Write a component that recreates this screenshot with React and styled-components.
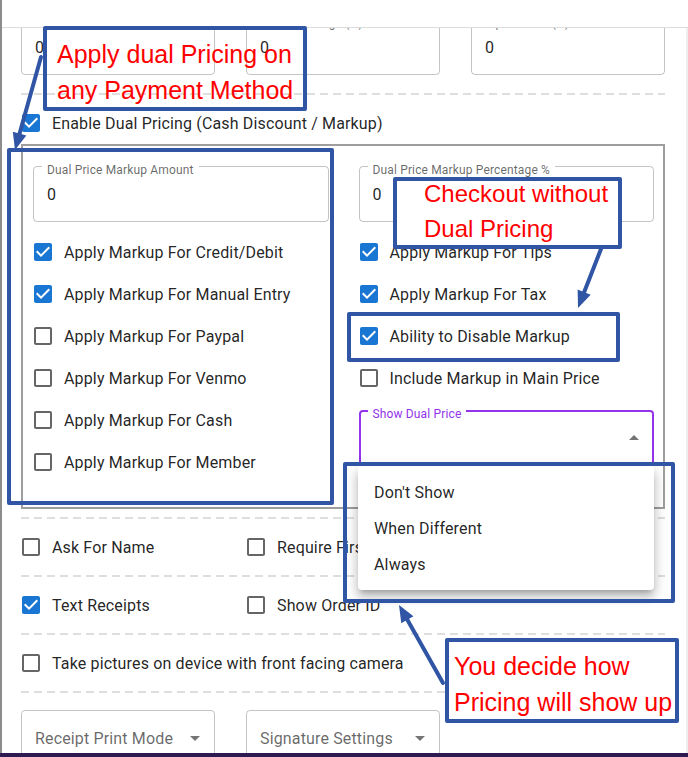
import React from "react";
import styled, { createGlobalStyle } from "styled-components";

const BLUE = "#2f55a4";
const PURPLE = "#9333ea";

const GlobalStyle = createGlobalStyle`
  html, body { margin: 0; padding: 0; }
  body {
    font-family: Roboto, "Liberation Sans", Arial, sans-serif;
    letter-spacing: 0.00938em;
    background: #2d1a52;
  }
`;

// mui style icon paths
const CHECKED = "M19 3H5c-1.11 0-2 .9-2 2v14c0 1.1.89 2 2 2h14c1.11 0 2-.9 2-2V5c0-1.1-.89-2-2-2zm-9 14l-5-5 1.41-1.41L10 14.17l7.59-7.59L19 8l-9 9z";
const UNCHECKED = "M19 5v14H5V5h14m0-2H5c-1.1 0-2 .9-2 2v14c0 1.1.9 2 2 2h14c1.1 0 2-.9 2-2V5c0-1.1-.9-2-2-2z";

const Check = ({ checked, label }) => (
  <CheckRow>
    <svg width="24" height="24" viewBox="0 0 24 24">
      <path d={checked ? CHECKED : UNCHECKED} fill={checked ? "#1976d2" : "rgba(0,0,0,0.6)"} />
    </svg>
    <span>{label}</span>
  </CheckRow>
);

const Caret = ({ up }) => (
  <svg width="24" height="24" viewBox="0 0 24 24">
    <path d={up ? "M7 14l5-5 5 5z" : "M7 10l5 5 5-5z"} fill="rgba(0,0,0,0.54)" />
  </svg>
);

const Field = ({ label, value }) => (
  <FieldBox>
    <FieldLabel>{label}</FieldLabel>
    <span>{value}</span>
  </FieldBox>
);

const SelectField = ({ placeholder, label, open }) => (
  <FieldBox $focused={open}>
    {label && <FieldLabel $focused={open}>{label}</FieldLabel>}
    <Placeholder>{placeholder}</Placeholder>
    <Caret up={open} />
  </FieldBox>
);

// arrow helper - line + filled head
const Arrow = ({ from, to }) => {
  const [x1, y1] = from;
  const [x2, y2] = to;
  const len = Math.hypot(x2 - x1, y2 - y1);
  const ux = (x2 - x1) / len;
  const uy = (y2 - y1) / len;
  const bx = x2 - ux * 17;
  const by = y2 - uy * 17;
  const nx = -uy * 7;
  const ny = ux * 7;
  return (
    <g>
      <line x1={x1} y1={y1} x2={bx + ux * 2} y2={by + uy * 2} stroke={BLUE} strokeWidth="4" strokeLinecap="round" />
      <polygon points={`${x2},${y2} ${bx + nx},${by + ny} ${bx - nx},${by - ny}`} fill={BLUE} />
    </g>
  );
};

const App = () => {
  return (
    <Page>
      <GlobalStyle />
      <Dialog>
        <Header />
        <Body>
          <Content>
            <ThreeCols>
              <Field label="Processing Fee (%)" value="0" />
              <Field label="Service Charge (%)" value="0" />
              <Field label="Tip Amount (%)" value="0" />
            </ThreeCols>
            <Dashed $mt={18} />
            <Spaced $mt={7}>
              <Check checked label="Enable Dual Pricing (Cash Discount / Markup)" />
            </Spaced>
            <DualBox>
              <Column>
                <Field label="Dual Price Markup Amount" value="0" />
                <List>
                  <Check checked label="Apply Markup For Credit/Debit" />
                  <Check checked label="Apply Markup For Manual Entry" />
                  <Check label="Apply Markup For Paypal" />
                  <Check label="Apply Markup For Venmo" />
                  <Check label="Apply Markup For Cash" />
                  <Check label="Apply Markup For Member" />
                </List>
              </Column>
              <Column>
                <Field label="Dual Price Markup Percentage %" value="0" />
                <List>
                  <Check checked label="Apply Markup For Tips" />
                  <Check checked label="Apply Markup For Tax" />
                  <Check checked label="Ability to Disable Markup" />
                  <Check label="Include Markup in Main Price" />
                </List>
                <Spaced $mt={11}>
                  <SelectField label="Show Dual Price" open />
                </Spaced>
              </Column>
            </DualBox>
            <Dashed $mt={8} />
            <OptionRow>
              <Check label="Ask For Name" />
              <Check label="Require First and Last Name" />
            </OptionRow>
            <Dashed />
            <OptionRow>
              <Check checked label="Text Receipts" />
              <Check label="Show Order ID" />
            </OptionRow>
            <Dashed />
            <OptionRow $single>
              <Check label="Take pictures on device with front facing camera" />
            </OptionRow>
            <Dashed />
            <ThreeCols $mt={17}>
              <SelectField placeholder="Receipt Print Mode" />
              <SelectField placeholder="Signature Settings" />
            </ThreeCols>
          </Content>
        </Body>
      </Dialog>

      <Menu>
        <MenuItem>Don't Show</MenuItem>
        <MenuItem>When Different</MenuItem>
        <MenuItem>Always</MenuItem>
      </Menu>

      <Callout $x={43} $y={26} $w={264} $h={85} $pad="6px 0 0 10px">
        Apply dual Pricing on<br />any Payment Method
      </Callout>
      <Callout $x={7} $y={148} $w={327} $h={357} />
      <Callout $x={393} $y={177} $w={229} $h={72} $fill $size={24} $lh={35} $pad="0 0 0 27px">
        <CalloutText $mt={-5}>Checkout without<br />Dual Pricing</CalloutText>
      </Callout>
      <Callout $x={347} $y={312} $w={273} $h={50} />
      <Callout $x={343} $y={462} $w={332} $h={141} />
      <Callout $x={445} $y={638} $w={234} $h={85} $fill $pad="6px 0 0 5px">
        You decide how<br />Pricing will show up
      </Callout>

      <ArrowLayer width="688" height="757" viewBox="0 0 688 757">
        <Arrow from={[41, 57]} to={[15, 150]} />
        <Arrow from={[601, 249]} to={[578, 308]} />
        <Arrow from={[443, 683]} to={[399, 605]} />
      </ArrowLayer>
    </Page>
  );
};

const Page = styled.div`
  position: relative;
  width: 688px;
  height: 757px;
  background: #2d1a52;
  overflow: hidden;
`;

const Dialog = styled.div`
  height: 753px;
  background: #fff;
  border-left: 2px solid #8c8c8c;
  box-sizing: border-box;
  display: flex;
  flex-direction: column;
`;

const Header = styled.div`
  height: 27px;
  flex-shrink: 0;
  border-bottom: 1px solid #dcdcdc;
`;

const Body = styled.div`
  flex: 1;
  overflow: hidden;
  border-right: 2px solid #eeeeee;
`;

const Content = styled.div`
  margin-top: -9px;
  padding: 0 21px 0 19px;
`;

const ThreeCols = styled.div`
  display: grid;
  grid-template-columns: repeat(3, minmax(0, 1fr));
  column-gap: 31px;
  margin-top: ${(p) => p.$mt || 0}px;
`;

const Spaced = styled.div`
  margin-top: ${(p) => p.$mt || 0}px;
`;

const Dashed = styled.div`
  height: 2px;
  margin-top: ${(p) => p.$mt || 0}px;
  background-image: repeating-linear-gradient(to right, #dedede 0 8px, transparent 8px 13px);
`;

const FieldBox = styled.div`
  position: relative;
  height: 56px;
  box-sizing: border-box;
  border: ${(p) => (p.$focused ? `2px solid ${PURPLE}` : "1px solid rgba(0,0,0,0.23)")};
  border-radius: 4px;
  display: flex;
  align-items: center;
  justify-content: space-between;
  padding: 0 ${(p) => (p.$focused ? 12 : 13)}px;
  font-size: 16px;
  color: rgba(0, 0, 0, 0.87);

  & svg {
    margin-right: -6px;
    flex-shrink: 0;
  }
`;

const FieldLabel = styled.span`
  position: absolute;
  top: ${(p) => (p.$focused ? -5 : -4)}px;
  left: ${(p) => (p.$focused ? 7 : 8)}px;
  padding: 0 5px;
  background: #fff;
  font-size: 12px;
  line-height: 14px;
  white-space: nowrap;
  color: ${(p) => (p.$focused ? PURPLE : "rgba(0,0,0,0.6)")};
`;

const Placeholder = styled.span`
  color: rgba(0, 0, 0, 0.6);
`;

const CheckRow = styled.label`
  display: flex;
  align-items: center;
  height: 42px;
  gap: 9px;
  font-size: 16px;
  color: rgba(0, 0, 0, 0.87);
  white-space: nowrap;

  & svg {
    margin-left: -2px;
    flex-shrink: 0;
  }
`;

const DualBox = styled.div`
  display: grid;
  grid-template-columns: minmax(0, 1fr) minmax(0, 1fr);
  column-gap: 30px;
  align-items: start;
  border: 2px solid #9e9e9e;
  padding: 20px 9px 24px 10px;
`;

const Column = styled.div`
  display: flex;
  flex-direction: column;
`;

const List = styled.div`
  margin-top: 9px;
`;

const OptionRow = styled.div`
  display: grid;
  grid-template-columns: ${(p) => (p.$single ? "1fr" : "repeat(3, minmax(0, 1fr))")};
  column-gap: 31px;
  padding: 7px 0;
`;

const Menu = styled.ul`
  position: absolute;
  left: 358px;
  top: 466px;
  width: 296px;
  margin: 0;
  padding: 8px 0;
  list-style: none;
  background: #fff;
  border-radius: 4px;
  box-shadow: 0px 5px 5px -3px rgba(0, 0, 0, 0.2), 0px 8px 10px 1px rgba(0, 0, 0, 0.14),
    0px 3px 14px 2px rgba(0, 0, 0, 0.12);
`;

const MenuItem = styled.li`
  height: 36px;
  padding: 0 16px;
  display: flex;
  align-items: center;
  font-size: 16px;
  color: rgba(0, 0, 0, 0.87);
`;

const Callout = styled.div`
  position: absolute;
  left: ${(p) => p.$x}px;
  top: ${(p) => p.$y}px;
  width: ${(p) => p.$w}px;
  height: ${(p) => p.$h}px;
  box-sizing: border-box;
  border: 4px solid ${BLUE};
  border-radius: 2px;
  background: ${(p) => (p.$fill ? "#fff" : "transparent")};
  padding: ${(p) => p.$pad || 0};
  color: #ff0000;
  font-family: "Liberation Sans", Arial, sans-serif;
  letter-spacing: 0;
  font-size: ${(p) => p.$size || 25}px;
  line-height: ${(p) => p.$lh || 36}px;
  white-space: nowrap;
`;

const CalloutText = styled.div`
  margin-top: ${(p) => p.$mt || 0}px;
`;

const ArrowLayer = styled.svg`
  position: absolute;
  left: 0;
  top: 0;
  pointer-events: none;
`;

export default App;
